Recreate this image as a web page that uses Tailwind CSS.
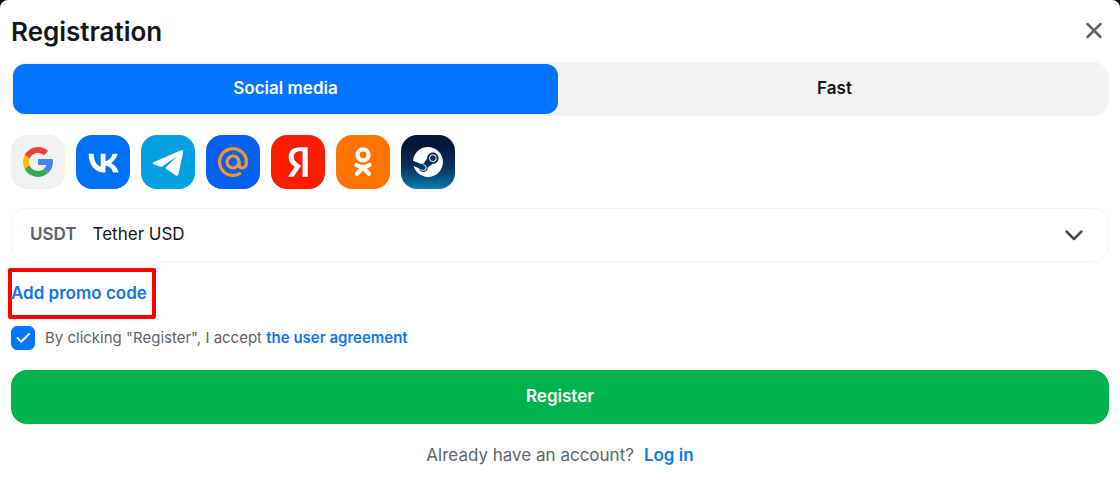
<!DOCTYPE html>
<html lang="en">
  <head>
    <title>Registration</title>
    <meta charset="utf-8" />
    <meta name="viewport" content="width=device-width, initial-scale=1" />
    <script src="https://cdn.jsdelivr.net/npm/@tailwindcss/browser@4"></script>
  </head>
  <body class="bg-black font-['Inter',sans-serif] text-[#141518]">
    <main class="min-h-screen bg-white rounded-t-lg px-[11px] pt-3">
      <header class="flex items-center justify-between h-[38px]">
        <h1 class="text-[26px] font-semibold">Registration</h1>
        <button type="button" aria-label="Close" class="text-[#5f646b] mr-[5px]">
          <svg class="size-5" viewBox="0 0 20 20" fill="none" stroke="currentColor" stroke-width="2.5" stroke-linecap="round">
            <path d="M3.5 3l13 13M16.5 3l-13 13" />
          </svg>
        </button>
      </header>

      <form>
        <!-- registration type -->
        <div class="grid grid-cols-2 gap-1 mt-3 p-0.5 h-[54px] rounded-2xl bg-[#f4f4f4] text-[17px] font-semibold">
          <button type="button" class="rounded-xl bg-[#0075ff] text-white">Social media</button>
          <button type="button" class="rounded-xl">Fast</button>
        </div>

        <!-- social networks -->
        <div class="flex gap-[11px] mt-[19px]">
          <button type="button" aria-label="Google" class="size-[54px] rounded-2xl bg-[#f1f1f1] flex items-center justify-center">
            <svg class="size-9" viewBox="0 0 48 48">
              <path fill="#4285f4" d="M43.6 20.1H42V20H24v8h11.3c-.8 2.2-2.2 4.2-4.1 5.6l6.2 5.2C37 39.2 44 34 44 24c0-1.3-.1-2.6-.4-3.9z" />
              <path fill="#ea4335" d="M6.3 14.7l6.6 4.8C14.7 15.1 19 12 24 12c3.1 0 5.8 1.2 7.9 3.1l5.7-5.7C34 6.1 29.3 4 24 4 16.3 4 9.7 8.3 6.3 14.7z" />
              <path fill="#34a853" d="M24 44c5.2 0 9.9-2 13.4-5.2l-6.2-5.2c-2 1.5-4.5 2.4-7.2 2.4-5.2 0-9.6-3.3-11.3-7.9l-6.5 5C9.5 39.6 16.2 44 24 44z" />
              <path fill="#fbbc05" d="M6.3 14.7C4.8 17.5 4 20.700 4 24c0 3.300.8 6.400 2.200 9.100l6.500-5c-.5-1.300-.7-2.700-.7-4.100 0-1.600.3-3.100.9-4.500z" />
            </svg>
          </button>
          <button type="button" aria-label="VK" class="size-[54px] rounded-2xl bg-[#0071f7] text-white flex items-center justify-center">
            <svg class="size-[45px]" viewBox="0 0 48 48" fill="currentColor">
              <path d="M25.54 34.58c-10.94 0-17.18-7.5-17.44-19.98h5.48c.18 9.16 4.22 13.04 7.42 13.84V14.6h5.16v7.9c3.16-.34 6.48-3.94 7.6-7.9h5.16c-.86 4.88-4.46 8.48-7.02 9.96 2.56 1.2 6.66 4.34 8.22 10.02h-5.68c-1.22-3.8-4.26-6.74-8.28-7.14v7.14z" />
            </svg>
          </button>
          <button type="button" aria-label="Telegram" class="size-[54px] rounded-2xl bg-[#03a0e2] text-white flex items-center justify-center">
            <svg class="size-[54px]" viewBox="0 0 54 54" fill="currentColor">
              <path d="M12.5 27.3L40 15.2c1.4-.6 2.4.2 2.1 1.7L37.5 39c-.4 1.9-1.6 2.3-3 1.3L25 33.7c-.5-.4-.5-1 0-1.5L36.3 20.8 21.4 31.4c-.6.4-1.2.5-1.9.3l-6.9-2.4c-1.3-.5-1.4-1.4-.1-2z" />
            </svg>
          </button>
          <button type="button" aria-label="Mail.ru" class="size-[54px] rounded-2xl bg-[#0560f2] text-[#f3982e] flex items-center justify-center">
            <svg class="size-[54px]" viewBox="0 0 54 54" fill="none" stroke="currentColor" stroke-width="3.2" stroke-linecap="round">
              <circle cx="27" cy="27" r="6" />
              <path d="M33 27v2.3c0 5.4 7.4 4.7 7.4-2.3A13.4 13.4 0 1 0 33.6 38.7" />
            </svg>
          </button>
          <button type="button" aria-label="Yandex" class="size-[54px] rounded-2xl bg-[#fc1c02] text-white flex items-center justify-center">
            <svg class="size-[60px] shrink-0" viewBox="-.5 0 24 24" fill="currentColor">
              <path d="M13.32 7.666h-.924c-1.694 0-2.585.858-2.585 2.123 0 1.43.616 2.1 1.881 2.959l1.045.704-3.003 4.487H7.49l2.695-4.014c-1.55-1.111-2.42-2.19-2.42-4.015 0-2.288 1.595-3.85 4.62-3.85h3.003v11.868H13.32z" />
            </svg>
          </button>
          <button type="button" aria-label="Odnoklassniki" class="size-[54px] rounded-2xl bg-[#ff7300] text-white flex items-center justify-center">
            <svg class="size-[54px]" viewBox="0 0 54 54" fill="none" stroke="currentColor" stroke-width="4.2" stroke-linecap="round">
              <circle cx="27" cy="19.8" r="5.5" />
              <path d="M20.5 30c4 2.4 9 2.4 13 0M27 32.5l-6 6.2M27 32.5l6 6.2" />
            </svg>
          </button>
          <button type="button" aria-label="Steam" class="size-[54px] rounded-2xl bg-linear-to-b from-[#061638] from-20% via-[#06325f] via-60% to-[#0c7fb0] text-white flex items-center justify-center">
            <svg class="size-[30px]" viewBox="0 0 24 24" fill="currentColor">
              <path d="M11.979 0C5.678 0 .511 4.86.022 11.037l6.432 2.658c.545-.371 1.203-.59 1.912-.59.063 0 .125.004.188.006l2.861-4.142V8.91c0-2.495 2.028-4.524 4.524-4.524 2.494 0 4.524 2.031 4.524 4.527s-2.03 4.525-4.524 4.525h-.105l-4.076 2.911c0 .052.004.105.004.159 0 1.875-1.515 3.396-3.39 3.396-1.635 0-3.016-1.173-3.331-2.727L.436 15.27C1.862 20.307 6.486 24 11.979 24c6.627 0 11.999-5.373 11.999-12S18.605 0 11.979 0zM7.54 18.21l-1.473-.61c.262.543.714.999 1.314 1.25 1.297.539 2.793-.076 3.332-1.375.263-.63.264-1.319.005-1.949s-.75-1.121-1.377-1.383c-.624-.26-1.29-.249-1.878-.03l1.523.63c.956.4 1.409 1.5 1.009 2.455-.397.957-1.497 1.41-2.454 1.012zm11.415-9.303c0-1.662-1.353-3.015-3.015-3.015-1.665 0-3.015 1.353-3.015 3.015 0 1.665 1.35 3.015 3.015 3.015 1.663 0 3.015-1.35 3.015-3.015zm-5.273-.005c0-1.252 1.013-2.266 2.265-2.266 1.249 0 2.266 1.014 2.266 2.266 0 1.251-1.017 2.265-2.266 2.265-1.253 0-2.265-1.014-2.265-2.265z" />
            </svg>
          </button>
        </div>

        <!-- currency -->
        <div class="relative flex items-center mt-[19px] h-[54px] rounded-2xl border border-[#f4f4f4] text-[17px]">
          <label for="currency" class="pl-[18px] font-semibold text-[#5c6067]">USDT</label>
          <select id="currency" class="appearance-none flex-1 h-full pl-4 pr-14 bg-transparent outline-none">
            <option>Tether USD</option>
          </select>
          <svg class="absolute right-6 size-5 pointer-events-none text-[#45484d]" viewBox="0 0 20 20" fill="none" stroke="currentColor" stroke-width="2.5" stroke-linecap="round" stroke-linejoin="round">
            <path d="M2.5 6.5l7.5 7.5 7.5-7.5" />
          </svg>
        </div>

        <div class="flex mt-1.5 -ml-[3px]">
          <button type="button" class="h-[51px] w-[148px] rounded-xs border-4 border-[#fe0000] text-[17px] font-semibold text-[#0f75f2] text-left whitespace-nowrap">
            <span class="-ml-px">Add promo code</span>
          </button>
        </div>

        <div class="flex items-center gap-2.5 mt-[7px] text-[15px] text-[#5f6369]">
          <div class="relative size-6">
            <input id="agree" type="checkbox" checked class="peer block appearance-none size-6 rounded-md border border-[#c8cbd0] checked:border-[#0075ff] checked:bg-[#0075ff]" />
            <svg class="absolute inset-0 size-6 pointer-events-none invisible peer-checked:visible text-white" viewBox="0 0 24 24" fill="none" stroke="currentColor" stroke-width="2" stroke-linecap="round" stroke-linejoin="round">
              <path d="M6.5 12l3.8 3.8 7.7-7.8" />
            </svg>
          </div>
          <p>
            <label for="agree">By clicking "Register", I accept</label>
            <a href="#" class="font-semibold text-[#0f75f2]">the user agreement</a>
          </p>
        </div>

        <button type="submit" class="block w-full h-[54px] mt-5 rounded-2xl bg-[#00b34c] text-[17px] font-semibold text-white">Register</button>
      </form>

      <p class="flex justify-center gap-2.5 mt-[19px] text-[17px] text-[#5f6369]">
        Already have an account?
        <a href="#" class="font-semibold text-[#0f75f2]">Log in</a>
      </p>
    </main>
  </body>
</html>
